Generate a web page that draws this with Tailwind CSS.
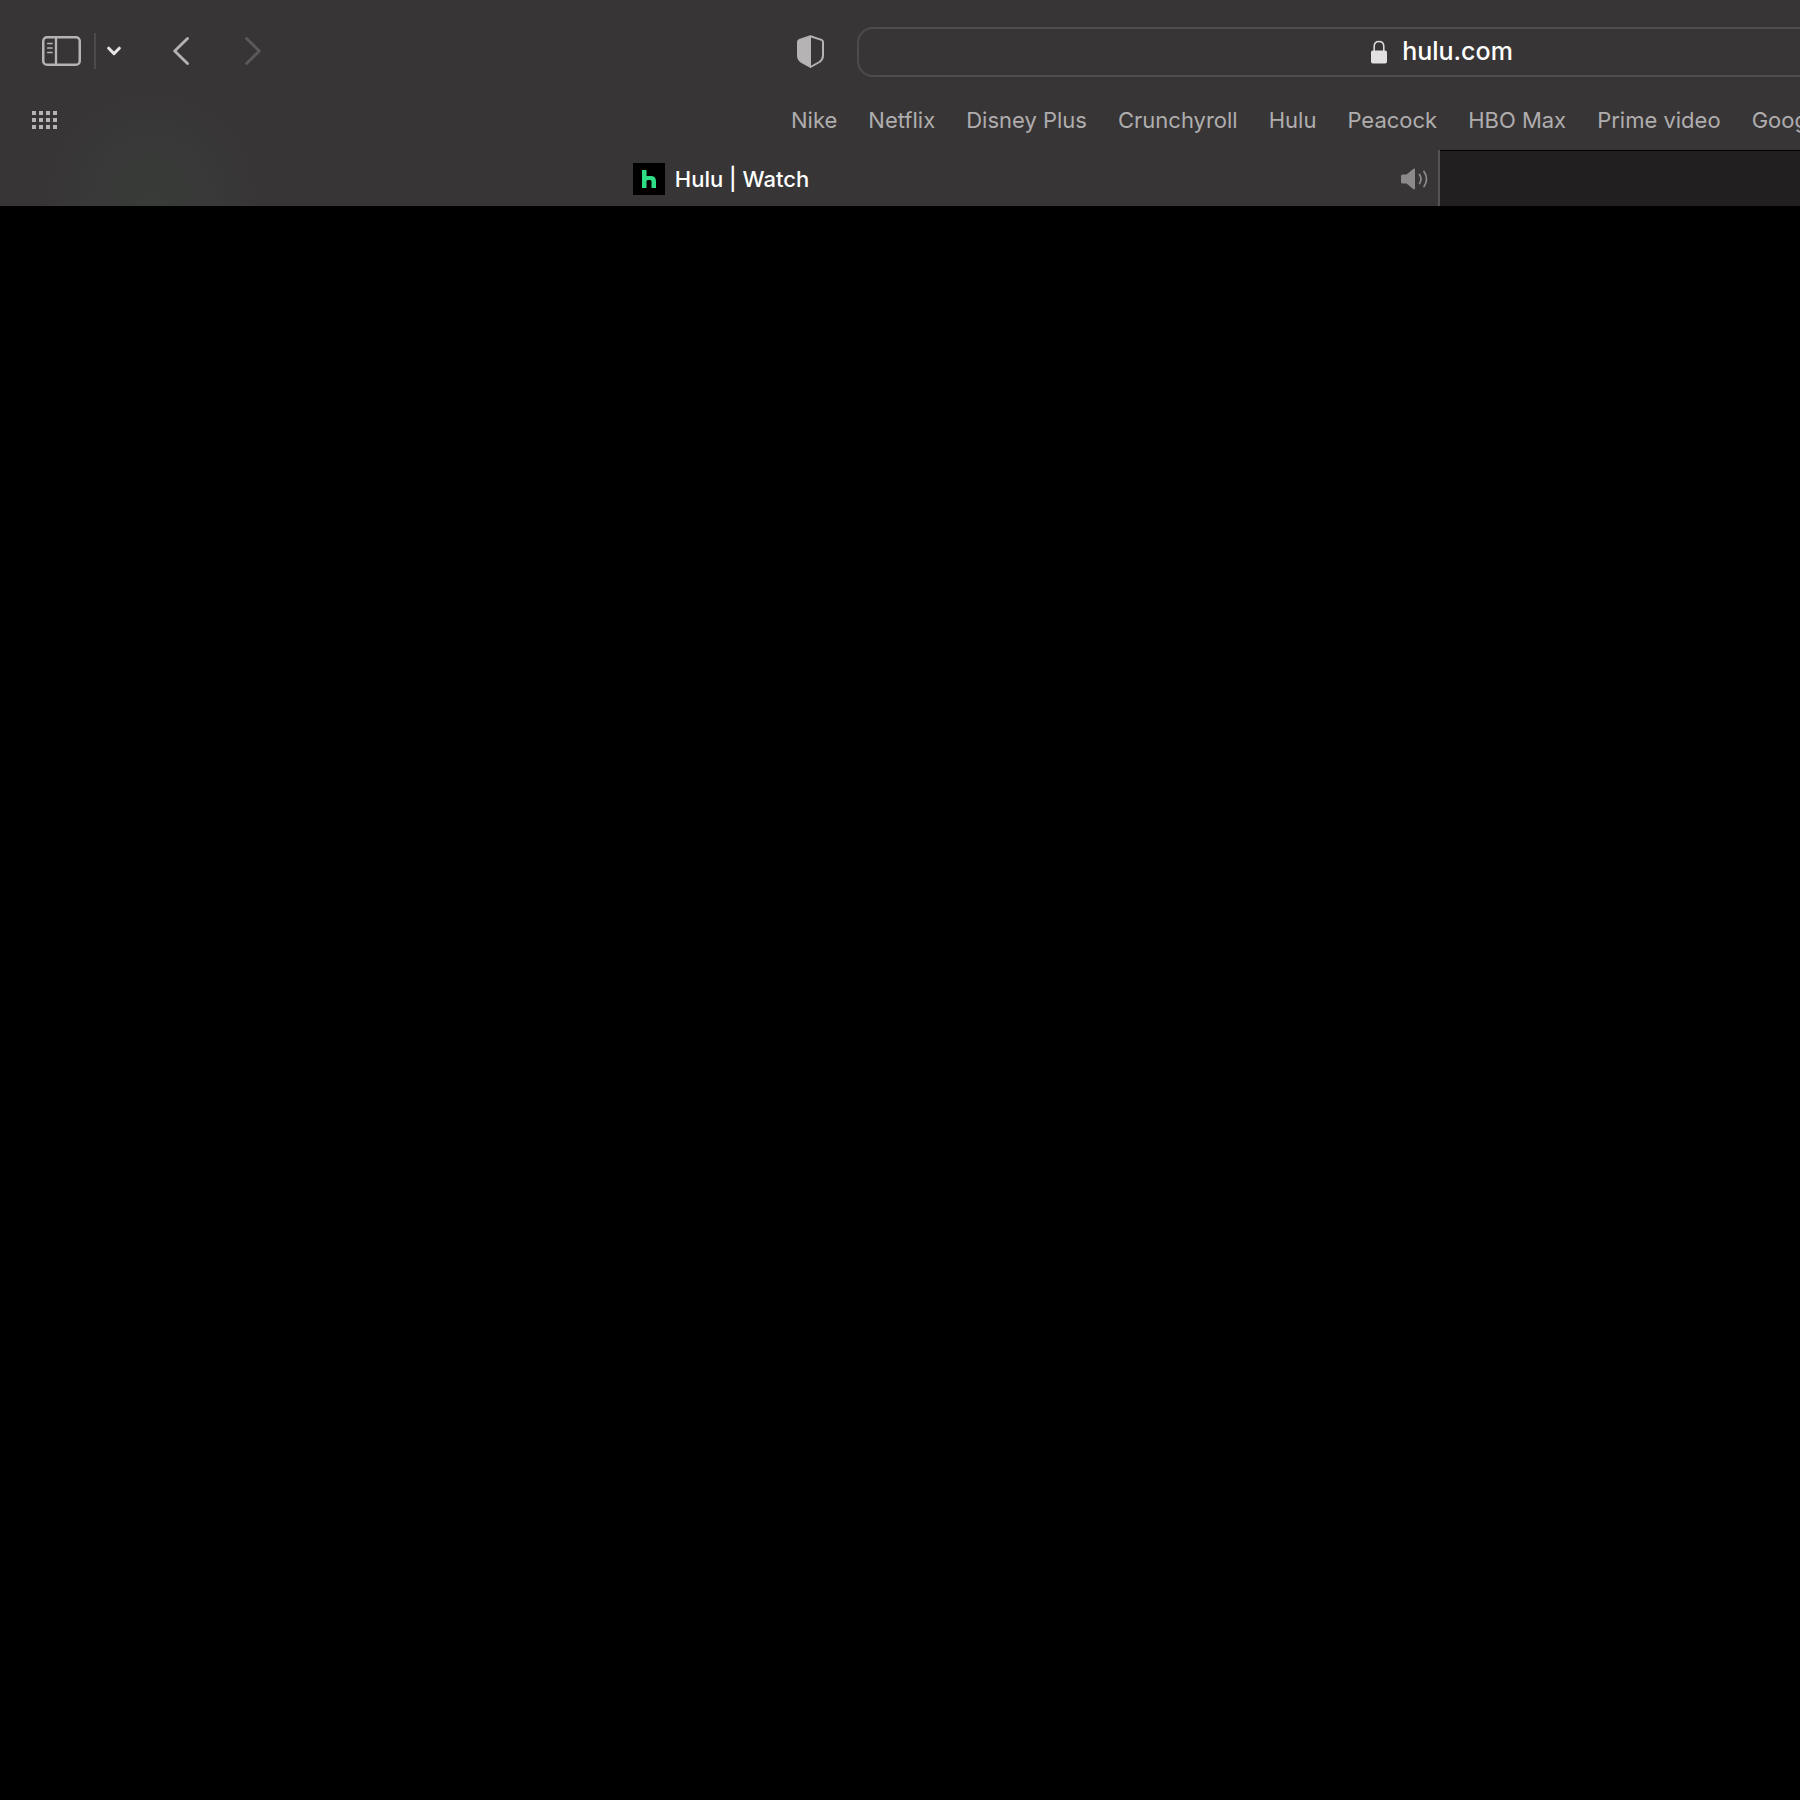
<!DOCTYPE html>
<html lang="en">
<head>
    <meta charset="UTF-8">
    <meta name="viewport" content="width=device-width, initial-scale=1.0">
    <title>Hulu | Watch</title>
    <script src="https://cdn.jsdelivr.net/npm/@tailwindcss/browser@4"></script>
</head>
<body class="min-h-screen overflow-x-hidden bg-black font-['Inter',sans-serif]">
    <div class="w-full overflow-hidden">
        <header class="w-[160%] bg-[#383536] bg-[radial-gradient(circle_at_152px_196px,#383b38_0px,#383938_55px,#383536_105px)]">
            <!-- Toolbar -->
            <div class="grid grid-cols-[1fr_1166px_1fr] items-center pt-[27px]">
                <div class="flex items-center justify-between pr-[33px] pb-[2px] pl-[42px]">
                    <div class="flex items-center">
                        <button type="button" aria-label="Show sidebar">
                            <svg class="block h-[30px] w-[39px]" viewBox="0 0 39 30" fill="none" stroke="#b5b3b4" stroke-linecap="round">
                                <rect x="1.25" y="1.25" width="36.5" height="27.5" rx="3.8" stroke-width="2.5"/>
                                <path d="M14 1.5v27" stroke-width="2.3" stroke-linecap="butt"/>
                                <path d="M5.800 7.500h4.200M5.800 12h4.200M5.800 16.500h4.200" stroke-width="1.7"/>
                            </svg>
                        </button>
                        <span class="ml-[13px] h-9 w-[2px] bg-[#4d4a4b]"></span>
                        <button type="button" class="ml-[11px]" aria-label="Tab groups">
                            <svg class="block h-[10px] w-[14px]" viewBox="0 0 14 10" fill="none" stroke="#e6e4e5" stroke-width="3" stroke-linecap="round" stroke-linejoin="round">
                                <path d="M1.700 2.200L7 7.600L12.300 2.200"/>
                            </svg>
                        </button>
                        <button type="button" class="ml-[52px]" aria-label="Back">
                            <svg class="block h-[28px] w-4" viewBox="0 0 16 28" fill="none" stroke="#b5b3b4" stroke-width="2.800" stroke-linecap="round" stroke-linejoin="round">
                                <path d="M14.500 1.500L1.700 14L14.500 26.500"/>
                            </svg>
                        </button>
                        <button type="button" class="ml-14" aria-label="Forward">
                            <svg class="block h-[28px] w-4" viewBox="0 0 16 28" fill="none" stroke="#5b595a" stroke-width="2.800" stroke-linecap="round" stroke-linejoin="round">
                                <path d="M1.500 1.500L14.300 14L1.500 26.500"/>
                            </svg>
                        </button>
                    </div>
                    <button type="button" aria-label="Privacy report">
                        <svg class="block h-[33px] w-[27px]" viewBox="0 0 27 33">
                            <path d="M13.500 1.200L24.500 4.900Q26 5.500 26 7V20.500Q26 24.500 22.500 27L13.500 32L4.500 27Q1 24.500 1 20.500V7Q1 5.500 2.500 4.900Z" fill="none" stroke="#b5b3b4" stroke-width="2" stroke-linejoin="round"/>
                            <path d="M14 1V32L4.500 27Q1 24.500 1 20.500V7Q1 5.500 2.500 4.900L13.500 1Z" fill="#b5b3b4"/>
                        </svg>
                    </button>
                </div>
                <label class="flex h-[50px] items-center justify-center gap-[15px] rounded-2xl border-2 border-[#4f4c4d] pl-1">
                    <svg class="block h-6 w-4" viewBox="0 0 16 24" role="img" aria-label="Secure address">
                        <path d="M3.200 12V6.500C3.200 3.300 5.200 1.500 8 1.500S12.800 3.300 12.800 6.500V12" fill="none" stroke="#e2e0e1" stroke-width="1.500"/>
                        <rect x="0" y="10.500" width="16" height="13" rx="1.800" fill="#e2e0e1"/>
                    </svg>
                    <input type="text" value="hulu.com" aria-label="Address" class="field-sizing-content pb-[2px] text-[25px] leading-8 font-medium text-white outline-none">
                </label>
            </div>

            <!-- Favorites bar -->
            <div class="flex h-[73px] items-center pt-[13px] pl-8">
                <button type="button" aria-label="Favorites">
                    <svg class="block h-[18px] w-[25px]" viewBox="0 0 25 18" fill="#b5b3b4">
                        <path d="M0 0h4v4H0zM7 0h4v4H7zM14 0h4v4h-4zM21 0h4v4h-4zM0 7h4v4H0zM7 7h4v4H7zM14 7h4v4h-4zM21 7h4v4h-4zM0 14h4v4H0zM7 14h4v4H7zM14 14h4v4h-4zM21 14h4v4h-4z"/>
                    </svg>
                </button>
                <nav class="ml-[734px] flex gap-[31px] text-[22px] leading-7 whitespace-nowrap text-[#afadae]">
                    <a href="#">Nike</a>
                    <a href="#">Netflix</a>
                    <a href="#">Disney Plus</a>
                    <a href="#">Crunchyroll</a>
                    <a href="#">Hulu</a>
                    <a href="#">Peacock</a>
                    <a href="#">HBO Max</a>
                    <a href="#">Prime video</a>
                    <a href="#">Google</a>
                </nav>
            </div>

            <!-- Tabs -->
            <div class="grid h-14 grid-cols-2">
                <div class="grid grid-cols-[1fr_auto_1fr] items-center border-r-2 border-[#555354] pt-[2px] pr-[10px] pl-[14px]">
                    <button type="button" class="col-start-2 flex items-center gap-[10px] text-[22px] leading-7 font-medium text-white">
                        <svg class="block size-8" viewBox="0 0 32 32">
                            <rect width="32" height="32" fill="#000"/>
                            <path d="M9 7h4.500v6.200c.6-.2 1.300-.3 2-.3h2.400c3.200 0 5.100 1.900 5.100 5V25h-4.500v-6.300c0-1.100-.6-1.700-1.700-1.700h-1.600c-1.100 0-1.700.6-1.700 1.700V25H9z" fill="#2fdf85"/>
                        </svg>
                        Hulu | Watch
                    </button>
                    <button type="button" class="justify-self-end" aria-label="Mute tab">
                        <svg class="block h-[22px] w-[27px]" viewBox="0 0 27 22" fill="none" stroke="#8c8a8b" stroke-linecap="round">
                            <path d="M1.500 6.500H5.500L12.500 .8Q14 0 14 1.500V20.500Q14 22 12.500 21.200L5.500 15.500H1.500Q0 15.500 0 14V8Q0 6.500 1.500 6.500Z" fill="#8c8a8b" stroke="none"/>
                            <path d="M18.500 6.500Q21.500 11 18.500 15.500M23 3.500Q28 11 23 18.500" stroke-width="1.700"/>
                        </svg>
                    </button>
                </div>
                <button type="button" aria-label="Second tab" class="border-t border-black bg-[#211f20]"></button>
            </div>
        </header>
    </div>
    <main></main>
</body>
</html>
